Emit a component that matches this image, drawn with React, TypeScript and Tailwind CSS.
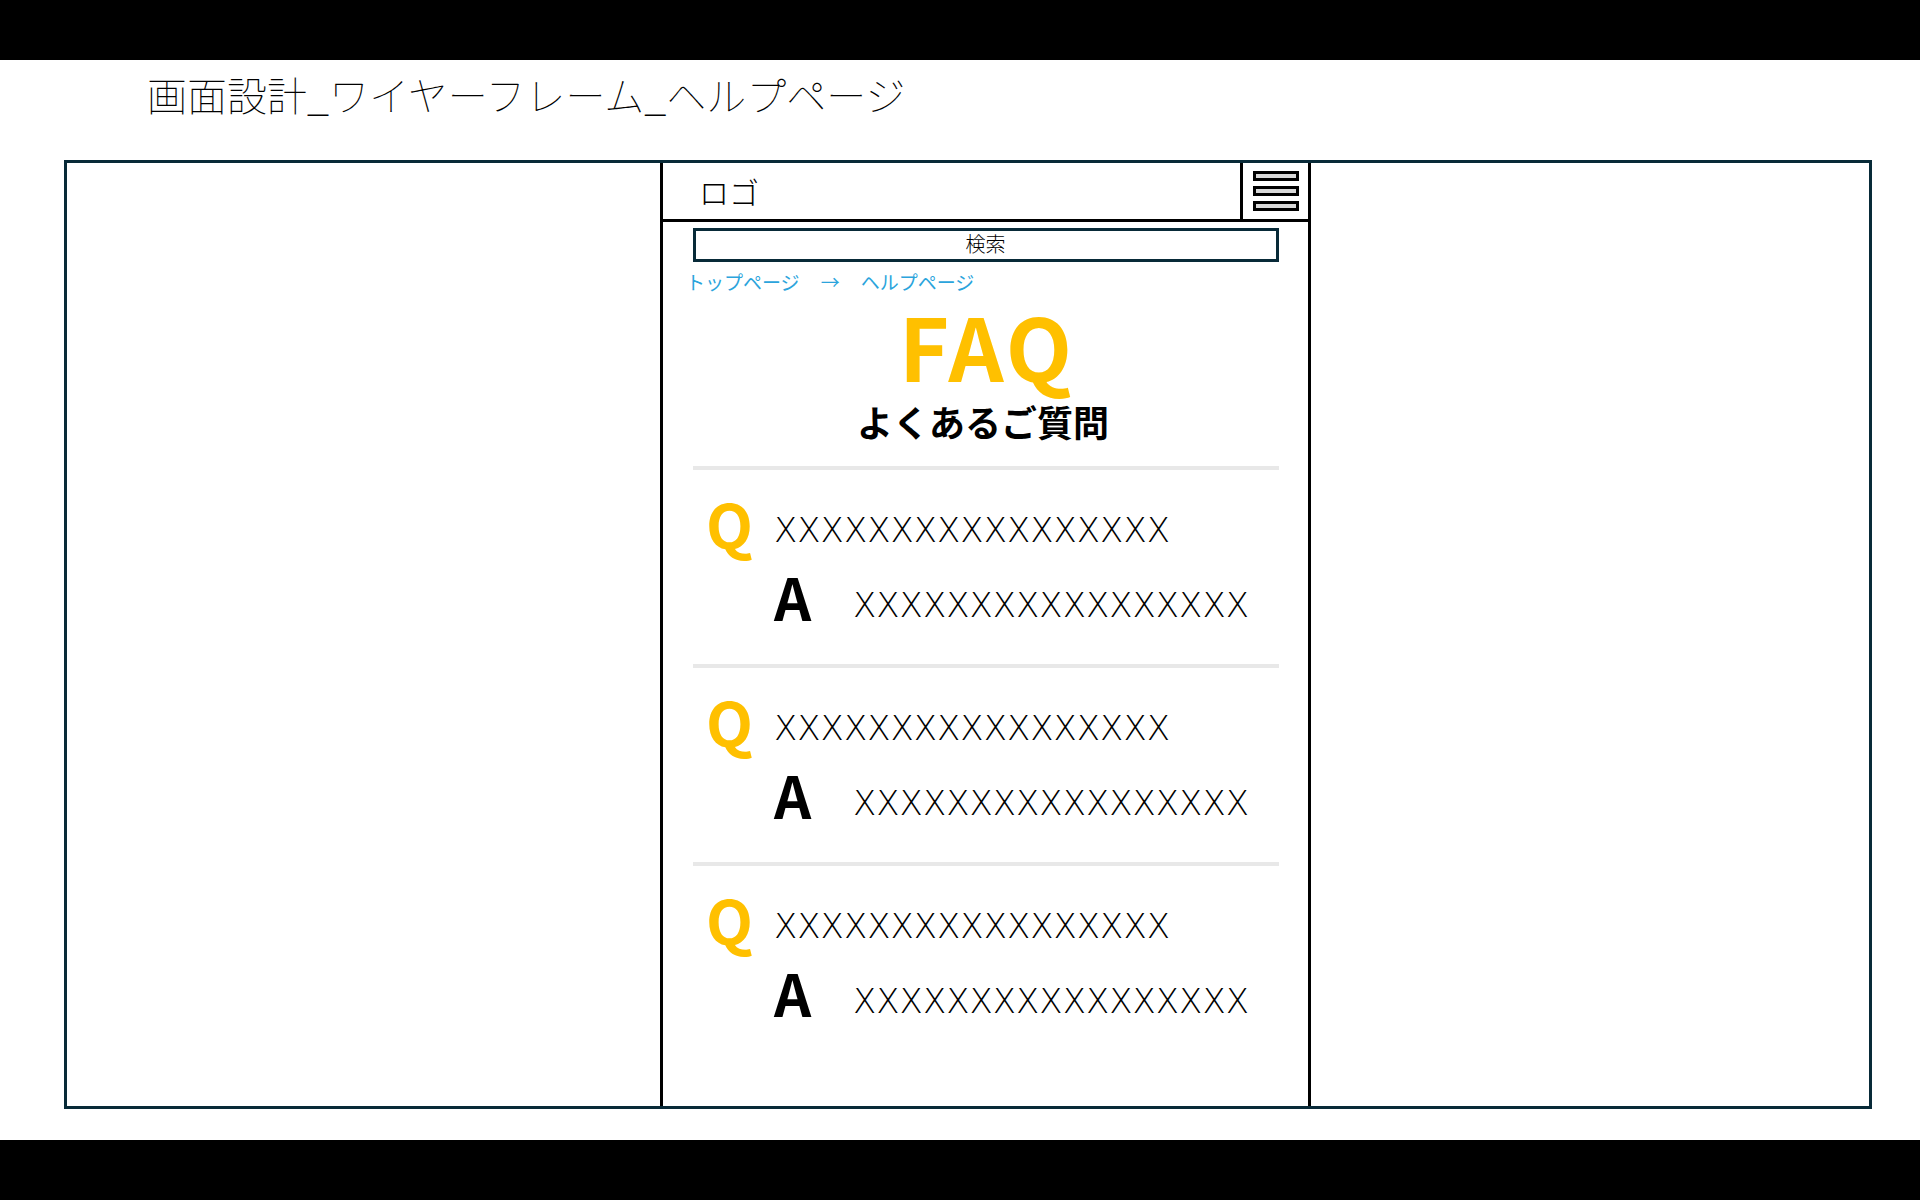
import React from "react";

const X = "XXXXXXXXXXXXXXXXX";

function Divider() {
  return <div className="mx-auto w-[586px] h-[4px] bg-[#e8e8e8] shrink-0" />;
}

function QA() {
  return (
    <div className="flex flex-col shrink-0">
      <div className="mt-[22px] flex items-start pl-[43px]">
        <span className="w-[68px] h-[61px] text-[61px] leading-[61px] font-bold text-[#ffc000]">Q</span>
        <span className="mt-[21px] text-[34px] leading-[34px] font-extralight text-black font-['DejaVu_Sans',sans-serif]">
          {X}
        </span>
      </div>
      <div className="mt-[14px] flex items-start pl-[111px]">
        <span className="w-[79px] h-[58px] text-[58px] leading-[58px] font-bold text-black">A</span>
        <span className="mt-[21px] text-[34px] leading-[34px] font-extralight text-black font-['DejaVu_Sans',sans-serif]">
          {X}
        </span>
      </div>
    </div>
  );
}

export default function App() {
  return (
    <div className="w-[1920px] h-[1200px] bg-white flex flex-col overflow-hidden font-['Noto_Sans_CJK_JP',sans-serif] text-black">
      <div className="h-[60px] bg-black shrink-0" />
      <div className="flex-1 flex flex-col">
        <div className="ml-[147px] mt-[14px] h-[40px] text-[40px] leading-[40px] font-thin">
          画面設計_ワイヤーフレーム_ヘルプページ
        </div>
        <div className="mt-[46px] ml-[64px] w-[1808px] h-[949px] border-[3px] border-[#082a38] flex">
          <div className="w-[593px] shrink-0" />
          <div className="w-[651px] shrink-0 border-x-[3px] border-black flex flex-col">
            <div className="h-[59px] border-b-[3px] border-black flex shrink-0">
              <div className="flex-1 flex items-center pl-[36px] text-[30px] leading-none font-light">ロゴ</div>
              <div className="w-[68px] border-l-[3px] border-black flex flex-col items-center justify-center gap-[5px]">
                <div className="w-[46px] h-[10px] border-[3px] border-black bg-[#d9d9d9]" />
                <div className="w-[46px] h-[10px] border-[3px] border-black bg-[#d9d9d9]" />
                <div className="w-[46px] h-[10px] border-[3px] border-black bg-[#d9d9d9]" />
              </div>
            </div>
            <div className="mx-auto mt-[6px] w-[586px] h-[34px] border-[3px] border-[#082a38] flex items-center justify-center pb-[2px] text-[20px] leading-none font-light shrink-0">
              検索
            </div>
            <div className="mt-[4px] h-[30px] pl-[23px] flex items-center text-[19px] leading-none text-[#2ba4dc] shrink-0">
              <span>トップページ</span>
              <span className="ml-[21px] mr-[21px]">→</span>
              <span>ヘルプページ</span>
            </div>
            <div className="mt-[6px] h-[86px] pl-[3px] text-center text-[86px] leading-[86px] tracking-[3px] font-bold text-[#ffc000] shrink-0">
              FAQ
            </div>
            <div className="mt-[15px] h-[36px] pr-[5px] text-center text-[36px] leading-[36px] font-bold shrink-0">
              よくあるご質問
            </div>
            <div className="mt-[27px]">
              <Divider />
            </div>
            <QA />
            <div className="mt-[39px]">
              <Divider />
            </div>
            <QA />
            <div className="mt-[39px]">
              <Divider />
            </div>
            <QA />
          </div>
          <div className="flex-1" />
        </div>
      </div>
      <div className="h-[60px] bg-black shrink-0" />
    </div>
  );
}
